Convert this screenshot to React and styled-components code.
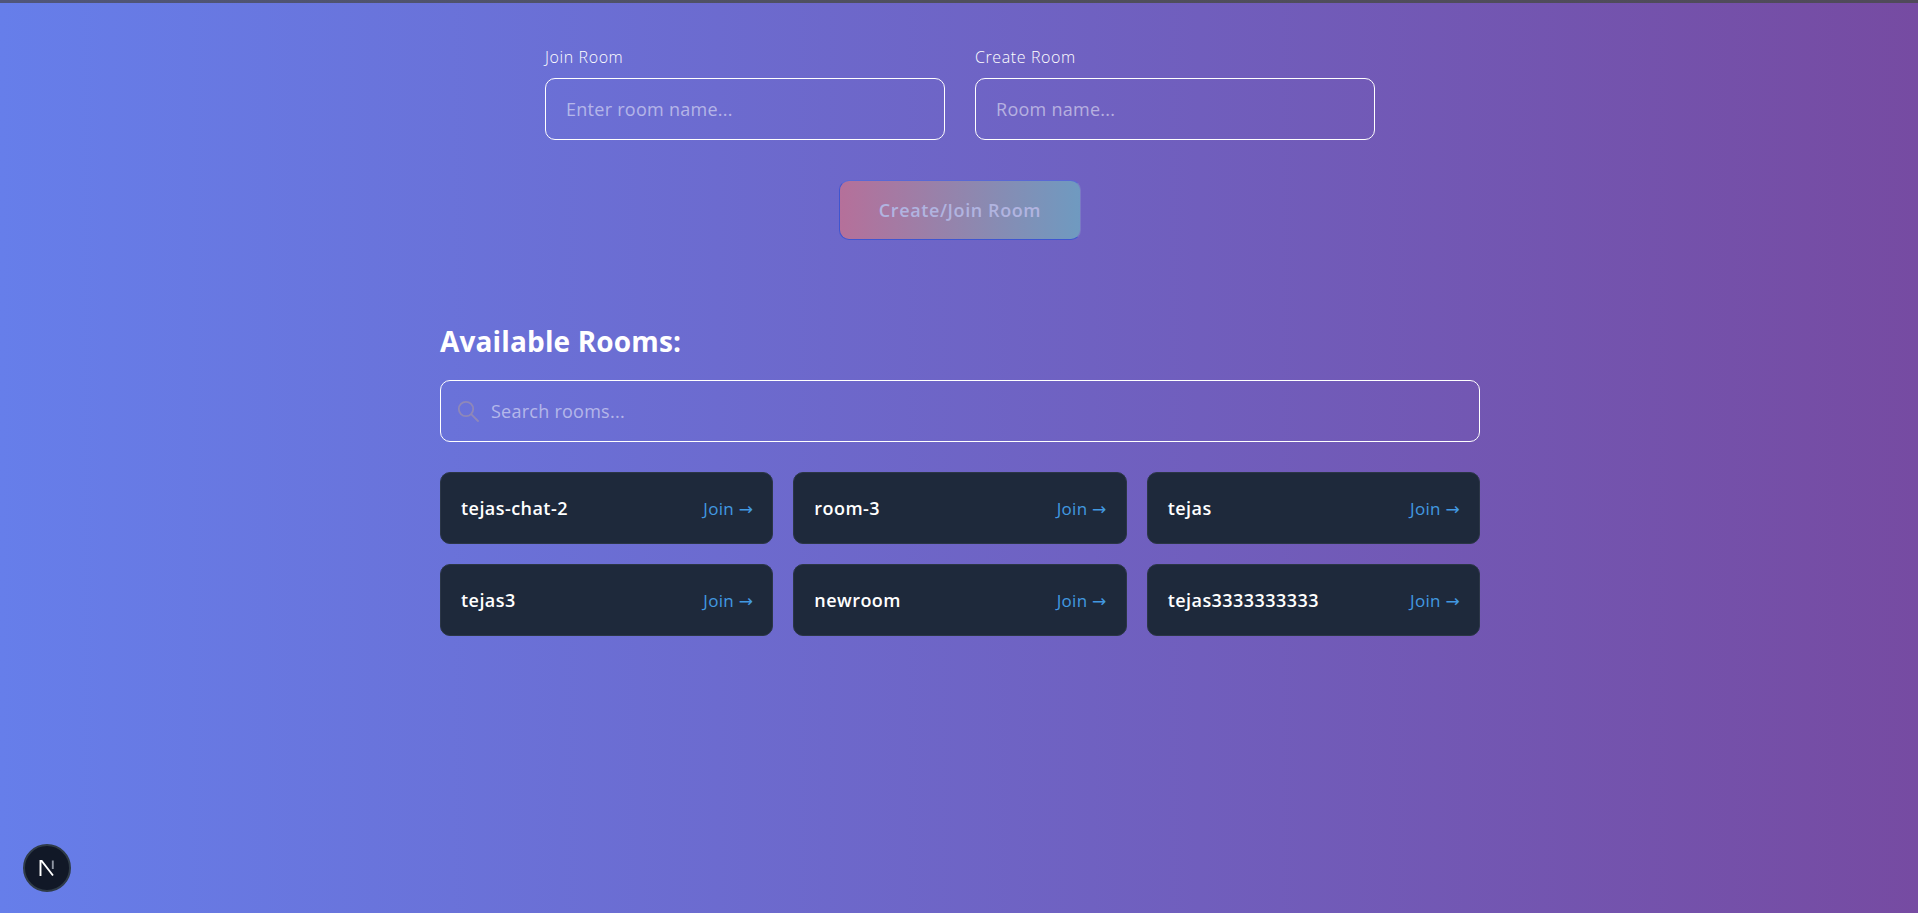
import React from "react";
import styled, { createGlobalStyle } from "styled-components";

const Global = createGlobalStyle`
  html, body { margin: 0; padding: 0; }
  body { font-family: "Open Sans", "Noto Sans", sans-serif; }
  * { box-sizing: border-box; }
`;

const Page = styled.div`
  position: relative;
  height: 913px;
  overflow: hidden;
  background: linear-gradient(90deg, #667eea 0%, #764ba2 100%);
`;

const TopLine = styled.div`
  height: 3px;
  background: linear-gradient(90deg, #50567a, #4f4f5c 50%, #504a5a);
`;

const Column = styled.main`
  padding-left: 2px;
  display: flex;
  flex-direction: column;
  align-items: center;
`;

const Forms = styled.div`
  margin-top: 44px;
  display: flex;
  gap: 30px;
`;

const Field = styled.div`
  width: 400px;
  display: flex;
  flex-direction: column;
  gap: 10px;
`;

const Label = styled.label`
  font-size: 16px;
  line-height: 21px;
  font-weight: 300;
  letter-spacing: 0.6px;
  color: #fff;
`;

const TextInput = styled.input`
  width: 100%;
  height: 62px;
  padding: 0 20px;
  background: transparent;
  border: 1px solid #fff;
  border-radius: 10px;
  outline: none;
  font: 400 18px "Open Sans", sans-serif;
  letter-spacing: 0.27px;
  color: #fff;
  &::placeholder { color: rgba(255, 255, 255, 0.5); opacity: 1; }
`;

const SubmitButton = styled.button`
  margin-top: 40px;
  width: 242px;
  height: 60px;
  border: 1px solid;
  border-color: #5a68d4 #7a78c4 #3f55d0 #3f55d0;
  border-radius: 10px;
  background: linear-gradient(90deg, #b5709a 0%, #6f9ac0 100%);
  color: #b1b4e0;
  font: 600 18px "Open Sans", sans-serif;
  letter-spacing: 0.6px;
`;

const Rooms = styled.section`
  width: 1040px;
  margin-top: 80px;
`;

const Heading = styled.h2`
  margin: 0;
  font-size: 28px;
  line-height: 42px;
  font-weight: 700;
  letter-spacing: 0.15px;
  color: #fff;
`;

const SearchBox = styled.div`
  margin-top: 18px;
  height: 62px;
  display: flex;
  align-items: center;
  gap: 10px;
  padding: 0 16px;
  border: 1px solid #fff;
  border-radius: 10px;
`;

const SearchIcon = styled.svg`
  width: 22px;
  height: 22px;
  flex: none;
  color: #8f88b8;
`;

const SearchInput = styled.input`
  flex: 1;
  border: 0;
  outline: none;
  background: transparent;
  font: 400 18px "Open Sans", sans-serif;
  letter-spacing: 0.25px;
  color: #fff;
  &::placeholder { color: rgba(255, 255, 255, 0.5); opacity: 1; }
`;

const Grid = styled.div`
  margin-top: 30px;
  display: grid;
  grid-template-columns: repeat(3, 1fr);
  gap: 20px;
`;

const Card = styled.div`
  height: 72px;
  display: flex;
  align-items: center;
  justify-content: space-between;
  padding: 0 19px 0 20px;
  background: #1e293b;
  border: 1px solid #2b3646;
  border-radius: 10px;
`;

const RoomName = styled.span`
  font-size: 18px;
  font-weight: 600;
  letter-spacing: 0.45px;
  color: #fff;
`;

const JoinLink = styled.a`
  font-size: 17px;
  font-weight: 500;
  letter-spacing: 0.3px;
  color: #4299e1;
`;

const Arrow = styled.span`
  font-family: "DejaVu Sans", sans-serif;
  font-size: 17px;
  font-weight: 400;
`;

const DevBadge = styled.div`
  position: absolute;
  left: 23px;
  top: 844px;
  width: 48px;
  height: 48px;
  border-radius: 50%;
  background: #111827;
  border: 2px solid #2f3b47;
  display: flex;
  align-items: center;
  justify-content: center;
`;

const rooms = ["tejas-chat-2", "room-3", "tejas", "tejas3", "newroom", "tejas3333333333"];

export default function App() {
  return (
    <Page>
      <Global />
      <TopLine />
      <Column>
        <Forms>
          <Field>
            <Label>Join Room</Label>
            <TextInput placeholder="Enter room name..." />
          </Field>
          <Field>
            <Label>Create Room</Label>
            <TextInput placeholder="Room name..." />
          </Field>
        </Forms>
        <SubmitButton disabled>Create/Join Room</SubmitButton>
        <Rooms>
          <Heading>Available Rooms:</Heading>
          <SearchBox>
            <SearchIcon viewBox="0 0 22 22" fill="none" stroke="currentColor" strokeWidth="1.8" strokeLinecap="round">
              <circle cx="9" cy="9" r="7.2" />
              <path d="M14.4 14.4 21 21" />
            </SearchIcon>
            <SearchInput placeholder="Search rooms..." />
          </SearchBox>
          <Grid>
            {rooms.map((r) => (
              <Card key={r}>
                <RoomName>{r}</RoomName>
                <JoinLink>Join <Arrow>→</Arrow></JoinLink>
              </Card>
            ))}
          </Grid>
        </Rooms>
      </Column>
      <DevBadge>
        <svg width="20" height="20" viewBox="0 0 20 20" fill="none">
          <path d="M3.5 18V3h1.2l11.3 14.5" stroke="#fff" strokeWidth="1.9" />
          <path d="M15.8 2.5v8.5" stroke="#8f96a3" strokeWidth="1.9" />
        </svg>
      </DevBadge>
    </Page>
  );
}
